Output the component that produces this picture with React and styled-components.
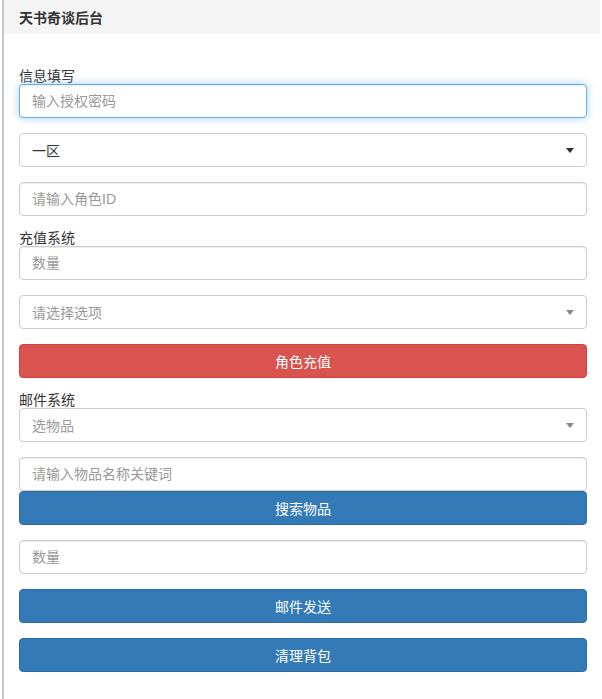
import React from "react";
import styled, { createGlobalStyle } from "styled-components";

const GlobalStyle = createGlobalStyle`
  html, body {
    margin: 0;
    padding: 0;
    background: #fff;
  }
  body {
    font-family: "Liberation Sans", "Noto Sans CJK SC", sans-serif;
    font-size: 14px;
    color: #333;
  }
  * {
    box-sizing: border-box;
  }
`;

const Page = styled.div`
  min-height: 699px;
  margin-left: 2px;
  border-left: 2px solid #c6c6c6;
`;

const Panel = styled.div`
  margin-right: 2px;
  background: #fff;
`;

const Heading = styled.div`
  height: 34px;
  display: flex;
  align-items: center;
  padding: 0 15px;
  background: #f5f5f5;
  font-size: 14px;
  font-weight: bold;
  color: #333;
`;

const Body = styled.div`
  display: flex;
  flex-direction: column;
  padding: 35px 13px 15px 15px;
`;

const SectionLabel = styled.div`
  line-height: 15px;
  height: 15px;
  font-size: 14px;
  color: #333;
`;

const Field = styled.input`
  display: block;
  width: 100%;
  height: 34px;
  margin: 0 0 ${(p) => (p.$tight ? "0" : "15px")};
  padding: 6px 12px;
  font: inherit;
  font-size: 14px;
  color: #555;
  background: #fff;
  border: 1px solid ${(p) => (p.$active ? "#66afe9" : "#ccc")};
  border-radius: 4px;
  outline: none;
  box-shadow: inset 0 1px 1px rgba(0, 0, 0, 0.075)
    ${(p) => (p.$active ? ", 0 0 8px rgba(102, 175, 233, 0.6)" : "")};
  &::placeholder {
    color: #999;
  }
`;

const Select = styled.div`
  display: flex;
  align-items: center;
  justify-content: space-between;
  height: 34px;
  margin-bottom: 15px;
  padding: 0 12px;
  border: 1px solid #ccc;
  border-radius: 4px;
  background: #fff;
  color: ${(p) => (p.$placeholder ? "#999" : "#333")};
  font-size: 14px;
`;

const Caret = styled.span`
  width: 0;
  height: 0;
  border-style: solid;
  border-width: 5px 4px 0 4px;
  border-color: ${(p) => (p.$dark ? "#333" : "#888")} transparent transparent
    transparent;
`;

const Button = styled.button`
  display: block;
  width: 100%;
  height: 34px;
  margin: 0 0 15px;
  padding: 0;
  font: inherit;
  font-size: 14px;
  color: #fff;
  border-radius: 4px;
  cursor: pointer;
  background: ${(p) => (p.$danger ? "#d9534f" : "#337ab7")};
  border: 1px solid ${(p) => (p.$danger ? "#d43f3a" : "#2e6da4")};
`;

function SelectBox({ value, placeholder, dark }) {
  return (
    <Select $placeholder={!value}>
      <span>{value || placeholder}</span>
      <Caret $dark={dark} />
    </Select>
  );
}

export default function App() {
  return (
    <Page>
      <GlobalStyle />
      <Panel>
        <Heading>天书奇谈后台</Heading>
        <Body>
          <SectionLabel>信息填写</SectionLabel>
          <Field $active placeholder="输入授权密码" autoFocus />
          <SelectBox value="一区" dark />
          <Field placeholder="请输入角色ID" />

          <SectionLabel>充值系统</SectionLabel>
          <Field placeholder="数量" />
          <SelectBox placeholder="请选择选项" />
          <Button $danger>角色充值</Button>

          <SectionLabel>邮件系统</SectionLabel>
          <SelectBox placeholder="选物品" />
          <Field $tight placeholder="请输入物品名称关键词" />
          <Button>搜索物品</Button>
          <Field placeholder="数量" />
          <Button>邮件发送</Button>
          <Button>清理背包</Button>
        </Body>
      </Panel>
    </Page>
  );
}
